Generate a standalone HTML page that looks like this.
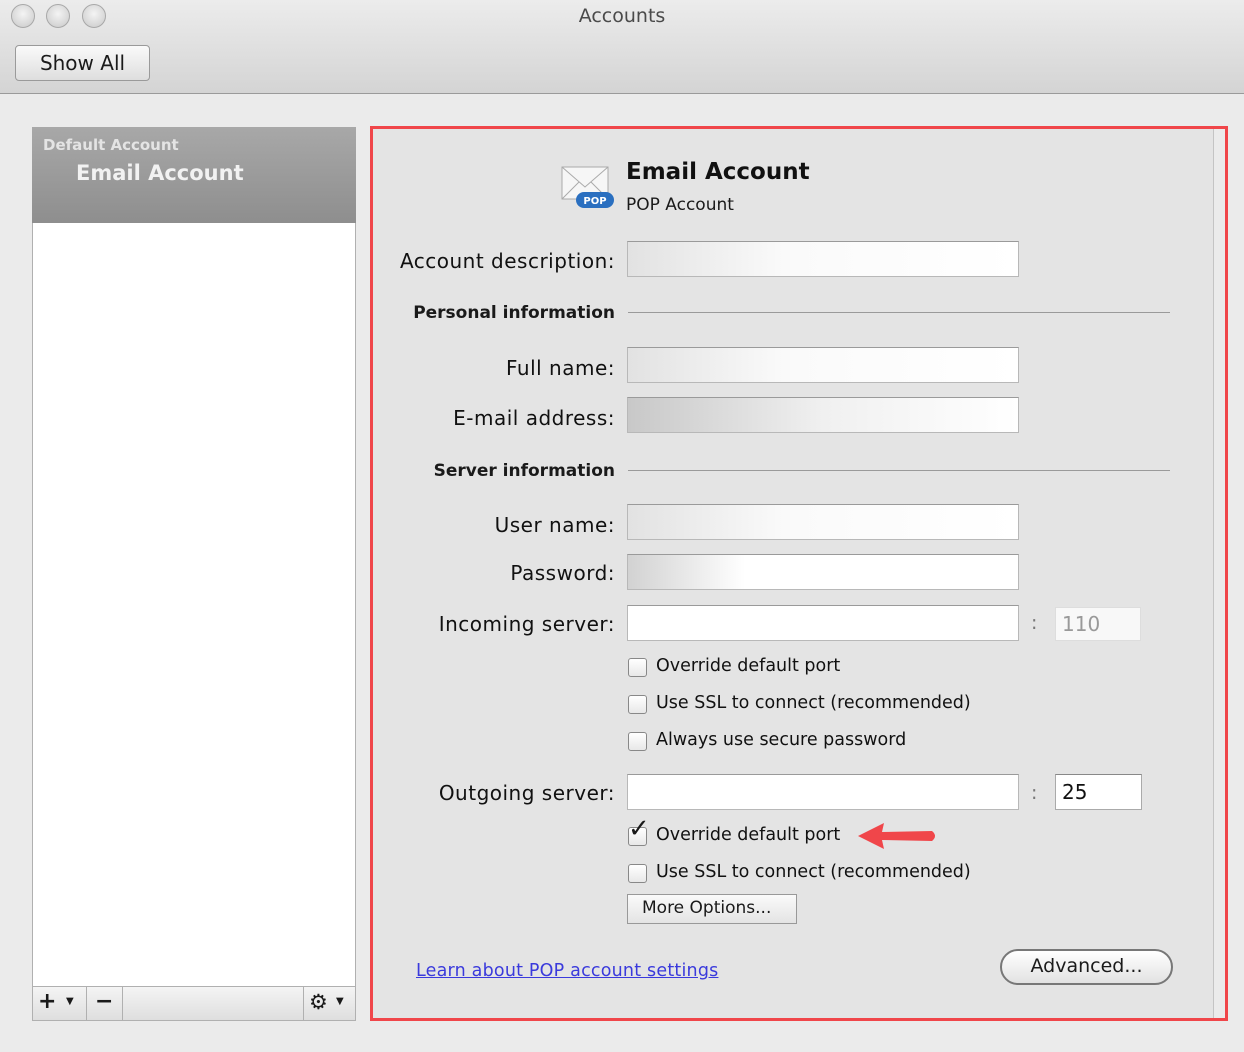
<!DOCTYPE html>
<html><head><meta charset="utf-8"><style>
*{margin:0;padding:0;box-sizing:border-box}
body{width:1244px;height:1052px;background:#ebebeb;font-family:"DejaVu Sans","Liberation Sans",sans-serif;position:relative;overflow:hidden;color:#1a1a1a}
.a{position:absolute}
.tb{left:0;top:0;width:1244px;height:94px;background:linear-gradient(#ececec,#d4d4d4);border-bottom:1px solid #9a9a9a}
.dot{width:24px;height:24px;border-radius:50%;background:radial-gradient(circle at 50% 40%,#f4f4f4,#c8c8c8);border:1px solid #a8a8a8;top:4px}
.lbl{right:629px;font-size:20px;letter-spacing:0.5px;text-align:right;white-space:nowrap;color:#111}
.sec{right:629px;font-size:17px;font-weight:bold;white-space:nowrap}
.fld{left:627px;width:392px;height:36px;border:1px solid #b8b8b8;border-top-color:#9a9a9a;background:linear-gradient(90deg,#e2e2e2,#fafafa 40%,#fff)}
.cb{left:628px;width:19px;height:19px;border:1px solid #888;border-radius:3px;background:linear-gradient(#fff,#e8e8e8)}
.ct{left:656px;font-size:17.5px;white-space:nowrap;color:#111}
.hr{left:628px;width:542px;height:1px;background:#9a9a9a}
</style></head><body>
<div class="a tb"></div>
<div class="a dot" style="left:11px"></div>
<div class="a dot" style="left:46px"></div>
<div class="a dot" style="left:82px"></div>
<div class="a" style="left:0;width:1244px;top:5px;text-align:center;font-size:19px;color:#4a4a4a">Accounts</div>
<div class="a" style="left:15px;top:45px;width:135px;height:36px;border:1px solid #9a9a9a;border-radius:4px;background:linear-gradient(#fafafa,#dedede);font-size:20px;text-align:center;line-height:34px">Show All</div>

<div class="a" style="left:32px;top:127px;width:324px;height:894px;background:#fff;border:1px solid #b0b0b0"></div>
<div class="a" style="left:32px;top:127px;width:324px;height:96px;background:linear-gradient(#a8a8a8,#8e8e8e)"></div>
<div class="a" style="left:43px;top:136px;font-size:15px;font-weight:bold;color:#e4e4e4">Default Account</div>
<div class="a" style="left:76px;top:161px;font-size:21px;font-weight:bold;color:#f2f2f2">Email Account</div>
<div class="a" style="left:32px;top:986px;width:324px;height:35px;background:linear-gradient(#f4f4f4,#dedede);border:1px solid #b0b0b0"></div>
<div class="a" style="left:86px;top:987px;width:1px;height:33px;background:#b0b0b0"></div>
<div class="a" style="left:122px;top:987px;width:1px;height:33px;background:#b0b0b0"></div>
<div class="a" style="left:303px;top:987px;width:1px;height:33px;background:#b0b0b0"></div>
<div class="a" style="left:38px;top:989px;font-size:22px;font-weight:bold">+</div>
<div class="a" style="left:66px;top:996px;font-size:10px">▼</div>
<div class="a" style="left:95px;top:989px;font-size:22px;font-weight:bold">−</div>
<div class="a" style="left:309px;top:990px;font-size:21px">⚙</div>
<div class="a" style="left:336px;top:996px;font-size:10px">▼</div>

<div class="a" style="left:372px;top:128px;width:842px;height:891px;background:#e4e4e4;border-right:1px solid #c4c4c4"></div>
<div class="a" style="left:370px;top:126px;width:858px;height:895px;border:3px solid #f0464a"></div>

<svg class="a" style="left:560px;top:163px" width="56" height="48" viewBox="0 0 56 48">
<rect x="2" y="4" width="46" height="32" fill="#f6f6f6" stroke="#aaa"/>
<path d="M2 4 L25 24 L48 4 M2 36 L19 19 M48 36 L31 19" fill="none" stroke="#aaa"/>
<rect x="16" y="29" width="38" height="16" rx="8" fill="#2a6fc0"/>
<text x="35" y="41" font-size="10" font-weight="bold" fill="#fff" text-anchor="middle" font-family="DejaVu Sans">POP</text>
</svg>
<div class="a" style="left:626px;top:159px;font-size:23px;font-weight:bold;color:#111">Email Account</div>
<div class="a" style="left:626px;top:195px;font-size:17px">POP Account</div>

<div class="a lbl" style="top:249px">Account description:</div>
<div class="a fld" style="top:241px"></div>
<div class="a sec" style="top:303px">Personal information</div>
<div class="a hr" style="top:312px"></div>
<div class="a lbl" style="top:356px">Full name:</div>
<div class="a fld" style="top:347px"></div>
<div class="a lbl" style="top:406px">E-mail address:</div>
<div class="a fld" style="top:397px;background:linear-gradient(90deg,#c8c8c8,#f0f0f0 50%,#fff)"></div>
<div class="a sec" style="top:461px">Server information</div>
<div class="a hr" style="top:470px"></div>
<div class="a lbl" style="top:513px">User name:</div>
<div class="a fld" style="top:504px"></div>
<div class="a lbl" style="top:561px">Password:</div>
<div class="a fld" style="top:554px;background:linear-gradient(90deg,#d2d2d2,#fff 30%)"></div>
<div class="a lbl" style="top:612px">Incoming server:</div>
<div class="a fld" style="top:605px;background:#fff"></div>
<div class="a" style="left:1031px;top:612px;font-size:19px;color:#777">:</div>
<div class="a" style="left:1055px;top:607px;width:86px;height:34px;background:#f8f8f8;border:1px solid #ddd;font-size:20px;color:#999;padding:4px 6px">110</div>

<div class="a cb" style="top:658px"></div><div class="a ct" style="top:656px">Override default port</div>
<div class="a cb" style="top:695px"></div><div class="a ct" style="top:693px">Use SSL to connect (recommended)</div>
<div class="a cb" style="top:732px"></div><div class="a ct" style="top:730px">Always use secure password</div>

<div class="a lbl" style="top:781px">Outgoing server:</div>
<div class="a fld" style="top:774px;background:#fff"></div>
<div class="a" style="left:1031px;top:782px;font-size:19px;color:#777">:</div>
<div class="a" style="left:1055px;top:774px;width:87px;height:36px;background:#fff;border:1px solid #aaa;border-top-color:#888;font-size:20px;color:#111;padding:5px 6px">25</div>

<div class="a cb" style="top:827px"></div>
<div class="a" style="left:628px;top:814px;font-size:26px;font-weight:bold">✓</div>
<div class="a ct" style="top:825px">Override default port</div>
<svg class="a" style="left:856px;top:820px" width="84" height="32"><path d="M2 16 L28 3 L26 12 L76 11 Q82 16 76 21 L26 20 L28 29 Z" fill="#f0464a"/></svg>
<div class="a cb" style="top:864px"></div><div class="a ct" style="top:862px">Use SSL to connect (recommended)</div>
<div class="a" style="left:627px;top:894px;width:170px;height:30px;border:1px solid #999;background:linear-gradient(#fafafa,#e4e4e4);font-size:17px;padding:3px 14px">More Options...</div>

<div class="a" style="left:416px;top:961px;font-size:17.5px;letter-spacing:0.2px;color:#3a3adc;text-decoration:underline">Learn about POP account settings</div>
<div class="a" style="left:1000px;top:949px;width:173px;height:36px;border:2px solid #777;border-radius:18px;background:linear-gradient(#fff,#e2e2e2);font-size:19px;text-align:center;line-height:31px">Advanced...</div>
</body></html>
